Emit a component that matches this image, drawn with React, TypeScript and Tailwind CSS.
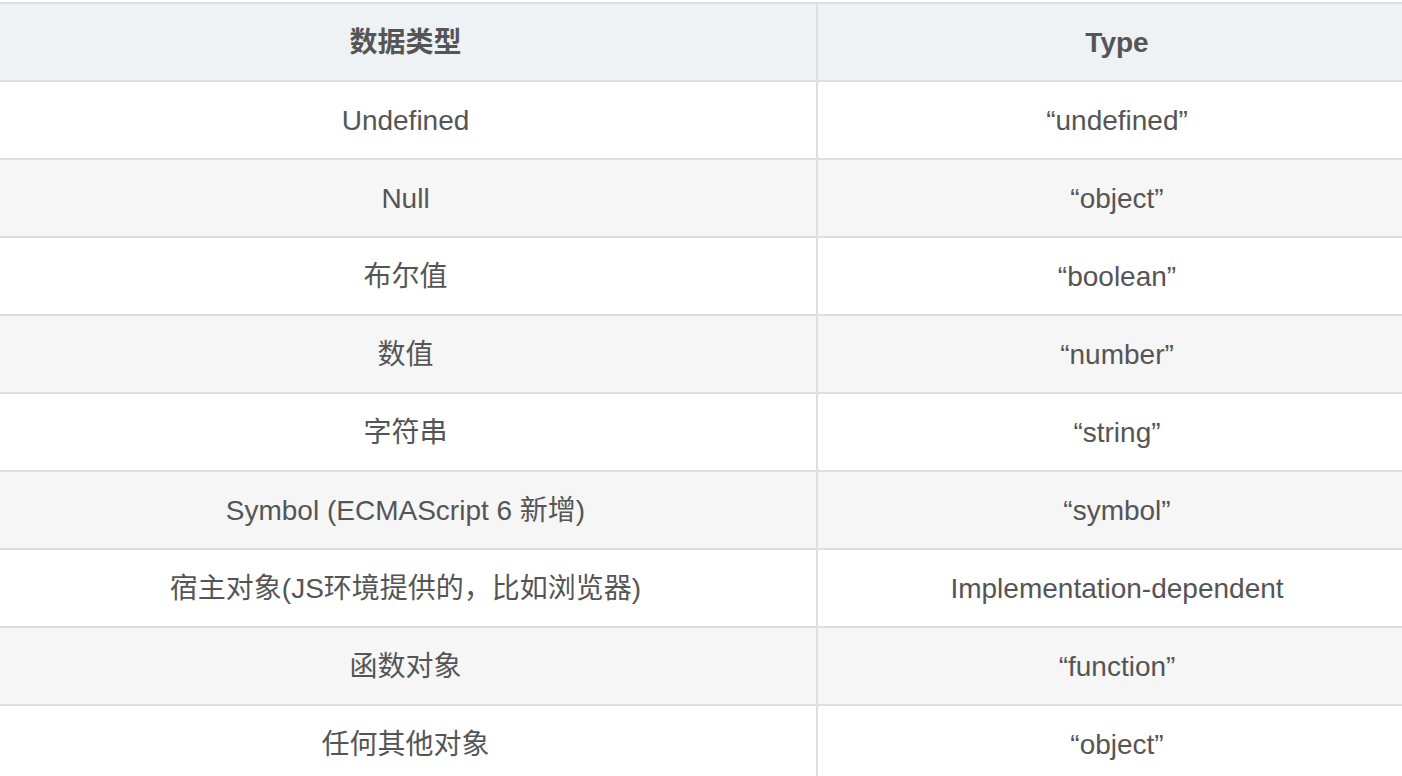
const rows: [string, string][] = [
  ["Undefined", "“undefined”"],
  ["Null", "“object”"],
  ["布尔值", "“boolean”"],
  ["数值", "“number”"],
  ["字符串", "“string”"],
  ["Symbol (ECMAScript 6 新增)", "“symbol”"],
  ["宿主对象(JS环境提供的，比如浏览器)", "Implementation-dependent"],
  ["函数对象", "“function”"],
  ["任何其他对象", "“object”"],
];

export default function App() {
  return (
    <div className="w-[1402px] h-[776px] overflow-hidden bg-white">
      <div
        className="ml-[-5px] mt-[2px] w-[1421px] text-[28px] text-[#555555]"
        style={{ fontFamily: '"Liberation Sans", "Noto Sans CJK SC", sans-serif' }}
      >
        <div className="flex h-[80px] border-y-2 border-[#dfdfdf] bg-[#eff2f5] font-bold">
          <div className="flex w-[823px] items-center justify-center border-r-2 border-[#dfdfdf] pt-[2px]">
            数据类型
          </div>
          <div className="flex flex-1 items-center justify-center pt-[2px]">Type</div>
        </div>
        {rows.map(([a, b], i) => (
          <div
            key={i}
            className={`flex h-[78px] border-b-2 border-[#dfdfdf] ${i % 2 === 1 ? "bg-[#f6f6f6]" : "bg-white"}`}
          >
            <div className="flex w-[823px] items-center justify-center border-r-2 border-[#dfdfdf] pt-[2px]">
              {a}
            </div>
            <div className="flex flex-1 items-center justify-center pt-[2px]">{b}</div>
          </div>
        ))}
      </div>
    </div>
  );
}
